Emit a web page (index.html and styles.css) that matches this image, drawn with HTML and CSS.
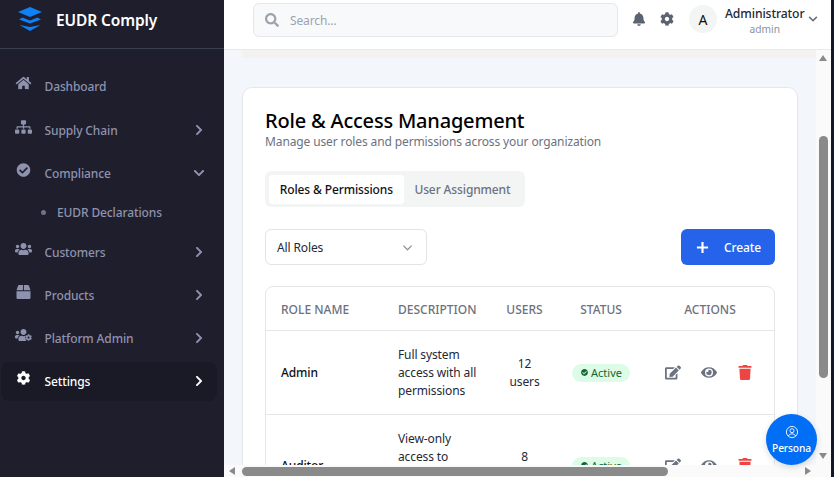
FILE: index.html
```html
<!DOCTYPE html>
<html lang="en">

<head>
    <meta charset="UTF-8">
    <meta name="viewport" content="width=device-width, initial-scale=1.0">
    <title>EUDR Comply</title>
    <link rel="stylesheet" href="styles.css">
</head>

<body>
    <!--Icon set-->
    <svg class="sprite" xmlns="http://www.w3.org/2000/svg">
        <symbol id="i-home" viewBox="0 0 576 512"><path d="M280.37 148.26L96 300.11V464a16 16 0 0 0 16 16l112.06-.29a16 16 0 0 0 15.92-16V368a16 16 0 0 1 16-16h64a16 16 0 0 1 16 16v95.64a16 16 0 0 0 16 16.05L464 480a16 16 0 0 0 16-16V300L295.67 148.26a12.19 12.19 0 0 0-15.3 0zM571.6 251.47L488 182.56V44.05a12 12 0 0 0-12-12h-56a12 12 0 0 0-12 12v72.61L318.47 43a48 48 0 0 0-61 0L4.34 251.47a12 12 0 0 0-1.6 16.9l25.5 31A12 12 0 0 0 45.15 301l235.22-193.74a12.19 12.19 0 0 1 15.3 0L530.9 301a12 12 0 0 0 16.9-1.6l25.5-31a12 12 0 0 0-1.7-16.93z"/></symbol>
        <symbol id="i-sitemap" viewBox="0 0 640 512"><path d="M128 352H32c-17.67 0-32 14.33-32 32v96c0 17.67 14.33 32 32 32h96c17.67 0 32-14.33 32-32v-96c0-17.67-14.33-32-32-32zm-24-80h192v48h48v-48h192v48h48v-57.59c0-21.17-17.23-38.41-38.41-38.41H344v-64h40c17.67 0 32-14.33 32-32V32c0-17.67-14.33-32-32-32H256c-17.67 0-32 14.33-32 32v96c0 17.67 14.33 32 32 32h40v64H94.41C73.23 224 56 241.23 56 262.41V320h48v-48zm264 80h-96c-17.67 0-32 14.33-32 32v96c0 17.67 14.33 32 32 32h96c17.67 0 32-14.33 32-32v-96c0-17.67-14.33-32-32-32zm240 0h-96c-17.67 0-32 14.33-32 32v96c0 17.67 14.33 32 32 32h96c17.67 0 32-14.33 32-32v-96c0-17.67-14.33-32-32-32z"/></symbol>
        <symbol id="i-check" viewBox="0 0 512 512"><path d="M504 256c0 136.967-111.033 248-248 248S8 392.967 8 256 119.033 8 256 8s248 111.033 248 248zM227.314 387.314l184-184c6.248-6.248 6.248-16.379 0-22.627l-22.627-22.627c-6.248-6.249-16.379-6.249-22.628 0L216 308.118l-70.059-70.059c-6.248-6.248-16.379-6.248-22.628 0l-22.627 22.627c-6.248 6.248-6.248 16.379 0 22.627l104 104c6.249 6.249 16.379 6.249 22.628.001z"/></symbol>
        <symbol id="i-users" viewBox="0 0 640 512"><path d="M96 224c35.3 0 64-28.7 64-64s-28.7-64-64-64-64 28.7-64 64 28.7 64 64 64zm448 0c35.3 0 64-28.7 64-64s-28.7-64-64-64-64 28.7-64 64 28.7 64 64 64zm32 32h-64c-17.6 0-33.5 7.1-45.1 18.6 40.3 22.1 68.9 62 75.1 109.4h66c17.7 0 32-14.3 32-32v-32c0-35.3-28.7-64-64-64zm-256 0c61.9 0 112-50.1 112-112S381.9 32 320 32 208 82.1 208 144s50.1 112 112 112zm76.8 32h-8.3c-20.8 10-43.9 16-68.5 16s-47.6-6-68.5-16h-8.3C179.6 288 128 339.6 128 403.2V432c0 26.5 21.5 48 48 48h288c26.5 0 48-21.5 48-48v-28.8c0-63.6-51.6-115.2-115.2-115.2zm-223.7-13.4C161.5 263.1 145.6 256 128 256H64c-35.3 0-64 28.7-64 64v32c0 17.7 14.3 32 32 32h65.9c6.3-47.4 34.9-87.3 75.2-109.4z"/></symbol>
        <symbol id="i-box" viewBox="0 0 512 512"><path d="M509.5 184.6L458.9 32.8C452.4 13.2 434.1 0 413.4 0H272v192h238.7c-.4-2.5-.4-5-1.2-7.4zM240 0H98.6c-20.7 0-39 13.2-45.5 32.8L2.5 184.6c-.8 2.4-.8 4.9-1.2 7.4H240V0zM0 224v240c0 26.5 21.5 48 48 48h416c26.5 0 48-21.5 48-48V224H0z"/></symbol>
        <symbol id="i-cog" viewBox="0 0 512 512"><path d="M487.4 315.7l-42.6-24.6c4.3-23.2 4.3-47 0-70.2l42.6-24.6c4.9-2.8 7.1-8.6 5.5-14-11.1-35.6-30-67.8-54.7-94.6-3.8-4.1-10-5.1-14.8-2.3L380.8 110c-17.9-15.4-38.5-27.3-60.8-35.1V25.8c0-5.6-3.9-10.5-9.4-11.7-36.7-8.2-74.3-7.8-109.2 0-5.5 1.2-9.4 6.1-9.4 11.7V75c-22.2 7.9-42.8 19.8-60.8 35.1L88.7 85.5c-4.9-2.8-11-1.9-14.8 2.3-24.7 26.7-43.6 58.9-54.7 94.6-1.7 5.4.6 11.2 5.5 14L67.3 221c-4.3 23.2-4.3 47 0 70.2l-42.6 24.6c-4.9 2.8-7.1 8.6-5.5 14 11.1 35.6 30 67.8 54.7 94.6 3.8 4.1 10 5.1 14.8 2.3l42.6-24.6c17.9 15.4 38.5 27.3 60.8 35.1v49.2c0 5.6 3.9 10.5 9.4 11.7 36.7 8.2 74.3 7.8 109.2 0 5.5-1.2 9.4-6.1 9.4-11.7v-49.2c22.2-7.9 42.8-19.8 60.8-35.1l42.6 24.6c4.9 2.8 11 1.9 14.8-2.3 24.7-26.7 43.6-58.9 54.7-94.6 1.5-5.5-.7-11.3-5.6-14.1zM256 336c-44.1 0-80-35.9-80-80s35.9-80 80-80 80 35.9 80 80-35.9 80-80 80z"/></symbol>
        <symbol id="i-users-cog" viewBox="0 0 640 512">
            <path d="M96 224c35.3 0 64-28.7 64-64s-28.7-64-64-64-64 28.7-64 64 28.7 64 64 64zm224 32c61.9 0 112-50.1 112-112S381.9 32 320 32 208 82.1 208 144s50.1 112 112 112zm-146.900 18.600C161.500 263.100 145.600 256 128 256H64c-35.300 0-64 28.700-64 64v32c0 17.700 14.300 32 32 32h65.900c6.300-47.400 34.900-87.300 75.200-109.400zM396 288h-8c-20.800 10-43.900 16-68 16s-47.600-6-68.500-16h-8.300C179.600 288 128 339.600 128 403.200V432c0 26.500 21.500 48 48 48h250c-30-30-40-110-30-192z"/>
            <path transform="translate(384 224) scale(.5)" d="M487.4 315.7l-42.6-24.6c4.3-23.2 4.3-47 0-70.2l42.6-24.6c4.9-2.8 7.1-8.6 5.5-14-11.1-35.6-30-67.8-54.7-94.6-3.8-4.1-10-5.1-14.8-2.3L380.8 110c-17.9-15.4-38.5-27.3-60.8-35.1V25.8c0-5.6-3.9-10.5-9.4-11.7-36.7-8.2-74.3-7.8-109.2 0-5.5 1.2-9.4 6.1-9.4 11.7V75c-22.2 7.9-42.8 19.8-60.8 35.1L88.7 85.5c-4.9-2.8-11-1.9-14.8 2.3-24.7 26.7-43.6 58.9-54.7 94.6-1.7 5.4.6 11.2 5.5 14L67.3 221c-4.3 23.2-4.3 47 0 70.2l-42.6 24.6c-4.9 2.8-7.1 8.6-5.5 14 11.1 35.6 30 67.8 54.7 94.6 3.8 4.1 10 5.1 14.8 2.3l42.6-24.6c17.9 15.4 38.5 27.3 60.8 35.1v49.2c0 5.6 3.9 10.5 9.4 11.7 36.7 8.2 74.3 7.8 109.2 0 5.5-1.2 9.4-6.1 9.4-11.7v-49.2c22.2-7.9 42.8-19.8 60.8-35.1l42.6 24.6c4.9 2.8 11 1.9 14.8-2.3 24.7-26.7 43.6-58.9 54.7-94.6 1.5-5.5-.7-11.3-5.6-14.1zM256 336c-44.1 0-80-35.9-80-80s35.9-80 80-80 80 35.9 80 80-35.9 80-80 80z"/>
        </symbol>
        <symbol id="i-bell" viewBox="0 0 448 512"><path d="M224 512c35.32 0 63.97-28.65 63.97-64H160.03c0 35.35 28.65 64 63.97 64zm215.39-149.71c-19.32-20.76-55.47-51.99-55.47-154.29 0-77.7-54.48-139.9-127.94-155.16V32c0-17.67-14.32-32-31.98-32s-31.98 14.33-31.98 32v20.84C118.56 68.1 64.08 130.3 64.08 208c0 102.3-36.15 133.53-55.47 154.29-6 6.45-8.66 14.16-8.61 21.71.11 16.4 12.98 32 32.1 32h383.8c19.12 0 32-15.6 32.1-32 .05-7.55-2.61-15.27-8.61-21.71z"/></symbol>
        <symbol id="i-search" viewBox="0 0 512 512"><path d="M505 442.7L405.3 343c-4.5-4.5-10.6-7-17-7H372c27.6-35.3 44-79.7 44-128C416 93.1 322.9 0 208 0S0 93.1 0 208s93.1 208 208 208c48.3 0 92.7-16.4 128-44v16.3c0 6.4 2.5 12.5 7 17l99.7 99.7c9.4 9.4 24.6 9.4 33.9 0l28.3-28.3c9.4-9.4 9.4-24.6.1-34zM208 336c-70.7 0-128-57.2-128-128 0-70.7 57.2-128 128-128 70.7 0 128 57.2 128 128 0 70.7-57.2 128-128 128z"/></symbol>
        <symbol id="i-edit" viewBox="0 0 576 512"><path d="M402.6 83.2l90.2 90.2c3.8 3.8 3.8 10 0 13.8L274.4 405.6l-92.8 10.3c-12.4 1.4-22.9-9.1-21.5-21.5l10.3-92.8L388.8 83.2c3.8-3.8 10-3.8 13.8 0zm162-22.9l-48.8-48.8c-15.2-15.2-39.9-15.2-55.2 0l-35.4 35.4c-3.8 3.8-3.8 10 0 13.8l90.2 90.2c3.8 3.8 10 3.8 13.8 0l35.4-35.4c15.2-15.3 15.2-40 0-55.2zM384 346.2V448H64V128h229.8c3.2 0 6.2-1.3 8.5-3.5l40-40c7.6-7.6 2.2-20.5-8.5-20.5H48C21.5 64 0 85.5 0 112v352c0 26.5 21.5 48 48 48h352c26.5 0 48-21.5 48-48V306.2c0-10.7-12.9-16-20.5-8.5l-40 40c-2.2 2.3-3.5 5.3-3.5 8.5z"/></symbol>
        <symbol id="i-eye" viewBox="0 0 576 512"><path d="M572.52 241.4C518.29 135.59 410.93 64 288 64S57.68 135.64 3.48 241.41a32.35 32.35 0 0 0 0 29.19C57.71 376.41 165.07 448 288 448s230.32-71.64 284.52-177.41a32.35 32.35 0 0 0 0-29.19zM288 400a144 144 0 1 1 144-144 143.93 143.93 0 0 1-144 144zm0-240a95.31 95.31 0 0 0-25.31 3.79 47.85 47.85 0 0 1-66.9 66.9A95.78 95.78 0 1 0 288 160z"/></symbol>
        <symbol id="i-trash" viewBox="0 0 448 512"><path d="M432 32H312l-9.4-18.7A24 24 0 0 0 281.1 0H166.8a23.72 23.72 0 0 0-21.4 13.3L136 32H16A16 16 0 0 0 0 48v32a16 16 0 0 0 16 16h416a16 16 0 0 0 16-16V48a16 16 0 0 0-16-16zM53.2 467a48 48 0 0 0 47.9 45h245.8a48 48 0 0 0 47.9-45L416 128H32z"/></symbol>
        <symbol id="i-right" viewBox="0 0 320 512"><path d="M285.476 272.971L91.132 467.314c-9.373 9.373-24.569 9.373-33.941 0l-22.667-22.667c-9.357-9.357-9.375-24.522-.04-33.901L188.505 256 34.484 101.255c-9.335-9.379-9.317-24.544.04-33.901l22.667-22.667c9.373-9.373 24.569-9.373 33.941 0L285.475 239.03c9.373 9.372 9.373 24.568.001 33.941z"/></symbol>
        <symbol id="i-down" viewBox="0 0 448 512"><path d="M207.029 381.476L12.686 187.132c-9.373-9.373-9.373-24.569 0-33.941l22.667-22.667c9.357-9.357 24.522-9.375 33.901-.04L224 284.505l154.745-154.021c9.379-9.335 24.544-9.317 33.901.04l22.667 22.667c9.373 9.373 9.373 24.569 0 33.941L240.971 381.476c-9.373 9.372-24.569 9.372-33.942 0z"/></symbol>
    </svg>

    <div class="app">
        <!--Sidebar-->
        <aside class="sidebar">
            <div class="brand">
                <svg class="brand-logo" viewBox="0 0 24 24">
                    <path d="M12 0 24 5 12 10 0 5z"/>
                    <path d="M4.500 10.500 12 13.500 19.500 10.500 23 12.500 12 16.500 1 12.500z"/>
                    <path d="M1.500 18 12 20 22.500 18 12 24z"/>
                </svg>
                <span>EUDR Comply</span>
            </div>
            <nav class="nav">
                <a class="nav-item first"><svg class="nav-icon"><use href="#i-home"/></svg><span>Dashboard</span></a>
                <a class="nav-item"><svg class="nav-icon"><use href="#i-sitemap"/></svg><span>Supply Chain</span><svg class="nav-arrow"><use href="#i-right"/></svg></a>
                <a class="nav-item"><svg class="nav-icon"><use href="#i-check"/></svg><span>Compliance</span><svg class="nav-arrow"><use href="#i-down"/></svg></a>
                <a class="nav-sub"><i></i><span>EUDR Declarations</span></a>
                <a class="nav-item"><svg class="nav-icon"><use href="#i-users"/></svg><span>Customers</span><svg class="nav-arrow"><use href="#i-right"/></svg></a>
                <a class="nav-item"><svg class="nav-icon"><use href="#i-box"/></svg><span>Products</span><svg class="nav-arrow"><use href="#i-right"/></svg></a>
                <a class="nav-item"><svg class="nav-icon"><use href="#i-users-cog"/></svg><span>Platform Admin</span><svg class="nav-arrow"><use href="#i-right"/></svg></a>
                <a class="nav-item active"><svg class="nav-icon"><use href="#i-cog"/></svg><span>Settings</span><svg class="nav-arrow"><use href="#i-right"/></svg></a>
            </nav>
        </aside>

        <div class="page">
            <!--Header-->
            <header class="topbar">
                <label class="search">
                    <svg><use href="#i-search"/></svg>
                    <span>Search...</span>
                </label>
                <div class="top-actions">
                    <svg class="top-icon"><use href="#i-bell"/></svg>
                    <svg class="top-icon"><use href="#i-cog"/></svg>
                    <div class="avatar">A</div>
                    <div class="who">
                        <strong>Administrator</strong>
                        <small>admin</small>
                    </div>
                    <svg class="who-arrow"><use href="#i-down"/></svg>
                </div>
            </header>

            <!--Contenido-->
            <main class="content">
                <div class="strip"></div>
                <section class="card">
                    <h1>Role &amp; Access Management</h1>
                    <p class="lead">Manage user roles and permissions across your organization</p>

                    <div class="tabs">
                        <button class="tab active">Roles &amp; Permissions</button>
                        <button class="tab">User Assignment</button>
                    </div>

                    <div class="toolbar">
                        <div class="select">
                            <span>All Roles</span>
                            <svg viewBox="0 0 12 12"><path d="M1.500 4 6 8.500 10.500 4"/></svg>
                        </div>
                        <button class="create"><svg viewBox="0 0 14 14"><path d="M7 1v12M1 7h12"/></svg><span>Create</span></button>
                    </div>

                    <div class="table-wrap">
                        <table>
                            <colgroup>
                                <col class="c-name"><col class="c-desc"><col class="c-users"><col class="c-status"><col class="c-actions">
                            </colgroup>
                            <thead>
                                <tr>
                                    <th>ROLE NAME</th>
                                    <th>DESCRIPTION</th>
                                    <th class="center">USERS</th>
                                    <th class="center">STATUS</th>
                                    <th class="center actions-head">ACTIONS</th>
                                </tr>
                            </thead>
                            <tbody>
                                <tr>
                                    <td class="role">Admin</td>
                                    <td>Full system access with all permissions</td>
                                    <td class="center users">12 users</td>
                                    <td class="center"><span class="badge"><svg><use href="#i-check"/></svg>Active</span></td>
                                    <td class="actions">
                                        <div class="row-actions">
                                            <svg class="edit"><use href="#i-edit"/></svg>
                                            <svg class="eye"><use href="#i-eye"/></svg>
                                            <svg class="trash"><use href="#i-trash"/></svg>
                                        </div>
                                    </td>
                                </tr>
                                <tr>
                                    <td class="role">Auditor</td>
                                    <td>View-only access to compliance data</td>
                                    <td class="center users">8 users</td>
                                    <td class="center"><span class="badge"><svg><use href="#i-check"/></svg>Active</span></td>
                                    <td class="actions">
                                        <div class="row-actions">
                                            <svg class="edit"><use href="#i-edit"/></svg>
                                            <svg class="eye"><use href="#i-eye"/></svg>
                                            <svg class="trash"><use href="#i-trash"/></svg>
                                        </div>
                                    </td>
                                </tr>
                            </tbody>
                        </table>
                    </div>
                </section>
            </main>
        </div>
    </div>

    <!--Barras de scroll-->
    <div class="vbar">
        <b class="arrow up"></b>
        <b class="thumb"></b>
        <b class="arrow dn"></b>
    </div>
    <div class="hbar">
        <b class="arrow lf"></b>
        <b class="thumb"></b>
        <b class="arrow rt"></b>
    </div>
    <div class="edge"></div>

    <button class="persona">
        <svg viewBox="0 0 16 16"><circle cx="8" cy="8" r="6.400"/><circle cx="8" cy="6.500" r="2.300"/><path d="M3.800 12.600c.8-1.700 2.400-2.500 4.200-2.500s3.400.8 4.200 2.500"/></svg>
        <span>Persona</span>
    </button>
</body>

</html>
```

FILE: styles.css
```css
* {
    box-sizing: border-box;
}

html,
body {
    height: 100%;
}

body {
    margin: 0;
    overflow: hidden;
    font-family: "Noto Sans", sans-serif;
    font-size: 12px;
    letter-spacing: -0.12px;
    color: #1f2430;
    background-color: #fff;
}

button {
    font: inherit;
    letter-spacing: inherit;
    border: none;
}

.sprite {
    display: none;
}

.app {
    display: flex;
    height: 477px;
}

/*Sidebar*/
.sidebar {
    width: 224px;
    flex-shrink: 0;
    background-color: #1e1e2d;
}

.brand {
    display: flex;
    align-items: center;
    gap: 14px;
    height: 49px;
    padding: 0 0 8px 18px;
    border-bottom: 1px solid #3a3f50;
    color: #fff;
    font-size: 15.500px;
    font-weight: 600;
}

.brand-logo {
    width: 24px;
    height: 24px;
    margin-top: -2px;
    fill: #1080f5;
}

.nav {
    display: flex;
    flex-direction: column;
    padding: 18px 7px 0 1px;
}

.nav-item {
    display: flex;
    align-items: center;
    height: 39px;
    margin-bottom: 4px;
    padding: 0 12px 0 14px;
    border-radius: 8px;
    font-weight: 500;
    color: #8f92ad;
    fill: #8f92ad;

    &.first {
        margin-bottom: 5px;
    }
}

.nav-item.active {
    background-color: #1a1a27;
    color: #fff;
    fill: #fff;
}

.nav-icon {
    width: 17px;
    height: 14px;
    margin-top: -8px;
    margin-right: 12.500px;
}

.nav-arrow {
    width: 12px;
    height: 12px;
    margin-left: auto;
    margin-top: -2px;
}

.nav-sub {
    display: flex;
    align-items: center;
    height: 32px;
    margin-top: -1px;
    margin-bottom: 5px;
    padding-left: 40px;
    font-weight: 500;
    color: #8f92ad;

    i {
        width: 5px;
        height: 5px;
        margin-right: 11px;
        border-radius: 50%;
        background-color: #6f7288;
    }
}

/*Header*/
.page {
    flex: 1;
    min-width: 0;
    display: flex;
    flex-direction: column;
}

.topbar {
    display: flex;
    align-items: flex-start;
    height: 50px;
    padding: 3px 0 0 29px;
    background-color: #fff;
    border-bottom: 1px solid #e8e9eb;
}

.search {
    display: flex;
    align-items: center;
    gap: 11px;
    width: 365px;
    height: 34px;
    padding-left: 11px;
    background-color: #f8f9fb;
    border: 1px solid #e5e7eb;
    border-radius: 6px;
    color: #9ca3af;
    fill: #9ca3af;

    svg {
        width: 14px;
        height: 14px;
    }
}

.top-actions {
    display: flex;
    align-items: center;
    height: 28px;
    margin-top: 2px;
    margin-left: 14px;
}

.top-icon {
    width: 14px;
    height: 14px;
    margin-right: 14px;
    fill: #5b6270;
}

.avatar {
    display: grid;
    place-content: center;
    width: 28px;
    height: 28px;
    margin-left: 1px;
    margin-right: 8px;
    border-radius: 50%;
    background-color: #f3f4f4;
    font-size: 14px;
    color: #111;
}

.who {
    display: flex;
    flex-direction: column;
    align-items: center;
    margin-top: 3px;

    strong {
        font-size: 12.200px;
        font-weight: 500;
        line-height: 17px;
        color: #1f2937;
    }

    small {
        font-size: 10.200px;
        letter-spacing: 0;
        line-height: 14px;
        color: #8a93a3;
    }
}

.who-arrow {
    width: 10px;
    height: 10px;
    margin-left: 3px;
    fill: #6b7280;
}

/*Contenido*/
.content {
    flex: 1;
    min-height: 0;
    overflow: hidden;
    padding: 0 36px 0 18px;
    background-color: #f3f6fa;
}

.strip {
    height: 8px;
    margin-right: -18px;
    background-color: #f3f2f0;
}

.card {
    margin-top: 29px;
    padding: 19px 22px 40px;
    background-color: #fff;
    border: 1px solid #e5e7eb;
    border-radius: 10px;
}

h1 {
    margin: 0;
    font-size: 20px;
    font-weight: 500;
    letter-spacing: -0.2px;
    line-height: 28px;
    color: #000;
}

.lead {
    margin: 0;
    line-height: 14px;
    color: #6b7280;
}

.tabs {
    display: inline-flex;
    gap: 0;
    height: 36px;
    margin-top: 22px;
    padding: 4px;
    background-color: #f3f4f4;
    border-radius: 6px;
    vertical-align: top;
}

.tab {
    padding: 0 10.750px;
    height: 29px;
    background: transparent;
    border-radius: 4px;
    font-weight: 500;
    color: #6b7280;

    &.active {
        background-color: #fff;
        color: #111;
    }
}

.toolbar {
    display: flex;
    justify-content: space-between;
    margin-top: 22px;
}

.select {
    display: flex;
    align-items: center;
    justify-content: space-between;
    width: 162px;
    height: 36px;
    padding: 0 13px 0 11px;
    border: 1px solid #e2e4e8;
    border-radius: 6px;
    color: #1f2937;

    svg {
        width: 11px;
        height: 11px;
        fill: none;
        stroke: #8b909a;
        stroke-width: 1.300;
    }
}

.create {
    display: flex;
    align-items: center;
    width: 94px;
    height: 36px;
    padding-left: 15px;
    gap: 15px;
    background-color: #2563eb;
    border-radius: 6px;
    font-weight: 500;
    color: #fff;

    svg {
        width: 13px;
        height: 13px;
        fill: none;
        stroke: #fff;
        stroke-width: 2.300;
    }
}

.table-wrap {
    margin-top: 21px;
    border: 1px solid #e5e7eb;
    border-radius: 8px;
    overflow: hidden;
}

table {
    width: 100%;
    table-layout: fixed;
    border-collapse: collapse;
}

.c-name { width: 117px; }
.c-desc { width: 108px; }
.c-users { width: 67px; }
.c-status { width: 86px; }

th {
    height: 43px;
    padding: 2px 0 0 15px;
    text-align: left;
    font-weight: 500;
    letter-spacing: 0;
    color: #6b7280;
    border-bottom: 1px solid #e5e7eb;
}

td {
    height: 83px;
    padding: 15px 12px 14px 15px;
    line-height: 18px;
    color: #1f2937;
    border-bottom: 1px solid #e5e7eb;
}

th.center,
td.center {
    padding-left: 10px;
    padding-right: 10px;
    text-align: center;
}

th.actions-head {
    padding-left: 12px;
}

td.users {
    padding-left: 14px;
    padding-right: 14px;
}

td.actions {
    padding-right: 15px;
}

.role {
    font-weight: 500;
    color: #111;
}

.badge {
    display: inline-flex;
    align-items: center;
    gap: 3px;
    height: 18px;
    padding: 0 8px 0 9px;
    border-radius: 9px;
    background-color: #dcfce7;
    color: #166534;
    font-size: 11px;
    letter-spacing: 0;
    line-height: 18px;

    svg {
        width: 7px;
        height: 7px;
        fill: #166534;
    }
}

.row-actions {
    display: flex;
    justify-content: center;
    align-items: center;
    gap: 20px;

    svg {
        width: 16px;
        height: 15px;
    }

    .edit,
    .eye {
        fill: #6b7280;
    }

    .trash {
        fill: #ef4444;
    }
}

/*Barras de scroll dibujadas*/
.vbar {
    position: absolute;
    top: 50px;
    left: 816px;
    width: 18px;
    height: 427px;
    background-color: #fafafa;

    .thumb {
        position: absolute;
        top: 86px;
        left: 3px;
        width: 9px;
        height: 242px;
        border-radius: 5px;
        background-color: #8a8a8a;
    }
}

.hbar {
    position: absolute;
    left: 224px;
    bottom: 0;
    width: 592px;
    height: 12px;
    background-color: #fafafa;

    .thumb {
        position: absolute;
        top: 2px;
        left: 18px;
        width: 426px;
        height: 9px;
        border-radius: 5px;
        background-color: #8a8a8a;
    }
}

.edge {
    position: absolute;
    top: 0;
    left: 831px;
    width: 3px;
    height: 477px;
    background-color: #111827;
}

.arrow {
    position: absolute;
    width: 0;
    height: 0;
    border: 0 solid transparent;

    &.up {
        top: 5px;
        left: 3px;
        border-width: 0 4.500px 6px;
        border-bottom-color: #8a8a8a;
    }

    &.dn {
        top: 403px;
        left: 3px;
        border-width: 6px 4.500px 0;
        border-top-color: #8a8a8a;
    }

    &.lf {
        top: 2px;
        left: 5px;
        border-width: 4.500px 6px 4.500px 0;
        border-right-color: #8a8a8a;
    }

    &.rt {
        top: 2px;
        left: 581px;
        border-width: 4.500px 0 4.500px 6px;
        border-left-color: #8a8a8a;
    }
}

.persona {
    position: absolute;
    left: 766px;
    top: 414px;
    display: flex;
    flex-direction: column;
    align-items: center;
    justify-content: center;
    width: 51px;
    height: 51px;
    padding: 0;
    border-radius: 50%;
    background-color: #006ff5;
    box-shadow: 0 2px 6px rgba(0, 0, 0, 0.15);
    color: #fff;
    font-size: 10.200px;
    font-weight: 500;
    line-height: 14px;

    svg {
        width: 14px;
        height: 14px;
        margin-bottom: 2px;
        fill: none;
        stroke: #fff;
        stroke-width: 1;
    }
}
```
